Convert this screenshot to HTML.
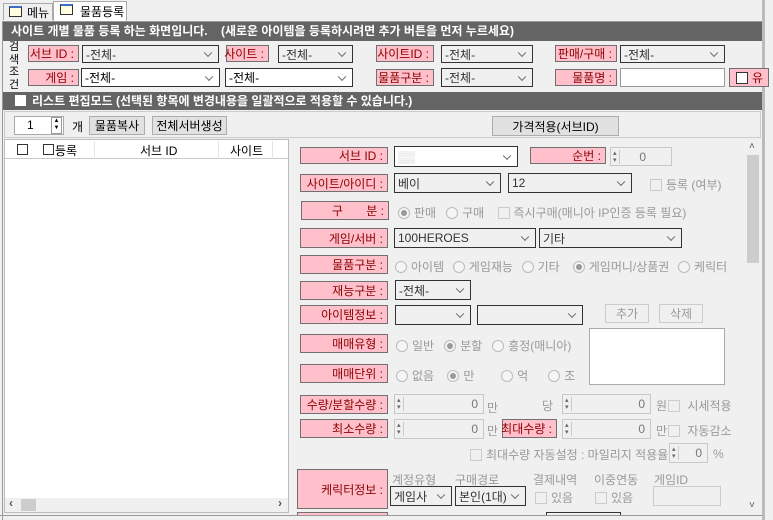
<!DOCTYPE html>
<html><head><meta charset="utf-8"><style>
*{box-sizing:border-box;margin:0;padding:0}
body{width:773px;height:520px;background:#f0f0f0;font-family:"Liberation Sans","Noto Sans CJK KR",sans-serif;font-size:12px;color:#000;position:relative;overflow:hidden}
.a{position:absolute}
.lb{position:absolute;background:#ffc0cb;border:1px solid #707070;color:#8b0000;padding-right:4px;white-space:nowrap;display:flex;align-items:center;justify-content:flex-end}
.sel{position:absolute;background:#fff;border:1px solid #333;padding-left:3px;white-space:nowrap;overflow:hidden;display:flex;align-items:center}
.sel:after{content:"";position:absolute;right:7px;top:50%;width:5px;height:5px;border-right:1px solid #666;border-bottom:1px solid #666;transform:translateY(-70%) rotate(45deg)}
.sel.d{background:#f0f0f0;color:#777}
.sel.d2{background:#f0f0f0;color:#333}
.btn{position:absolute;background:#e1e1e1;border:1px solid #adadad;display:flex;align-items:center;justify-content:center}
.btn.d{color:#999;background:#f0f0f0;border-color:#ccc}
.dis{position:absolute;color:#999;white-space:nowrap}
.rad{display:inline-block;width:12px;height:12px;border:1px solid #bbb;border-radius:50%;vertical-align:-2px;margin-right:4px;background:#f5f5f5;position:relative}
.rad.on:after{content:"";position:absolute;left:2px;top:2px;width:6px;height:6px;border-radius:50%;background:#999}
.cb{display:inline-block;width:12px;height:12px;border:1px solid #ccc;vertical-align:-2px;margin-right:4px;background:#f0f0f0}
.spin{position:absolute;background:#f0f0f0;border:1px solid #c8c8c8;padding-right:5px;color:#777;display:flex;align-items:center;justify-content:flex-end}
.spin:before{content:"▴\A▾";white-space:pre;position:absolute;left:2px;top:2px;font-size:7px;line-height:7px;color:#666;border-right:1px solid #ccc;padding-right:2px}
.bar{position:absolute;background:#646464;color:#fff;font-weight:bold}
</style></head><body>
<div class="a" style="left:3px;top:3px;width:50px;height:17px;border:1px solid #aaa;border-bottom:none;background:#f0f0f0"></div>
<div class="a" style="left:9px;top:6px;width:13px;height:11px;border:1px solid #333;border-top:2px solid #3a6fc9;background:#ffffe0"></div>
<div class="a" style="left:27px;top:4px">메뉴</div>
<div class="a" style="left:53px;top:1px;width:74px;height:21px;border:1px solid #aaa;border-bottom:none;background:#fff"></div>
<div class="a" style="left:60px;top:4px;width:13px;height:11px;border:1px solid #333;border-top:2px solid #3a6fc9;background:#ffffe0"></div>
<div class="a" style="left:80px;top:3px">물품등록</div>
<div class="a" style="left:2px;top:21px;width:762px;height:499px;border:1px solid #999;border-bottom:none"></div>
<div class="a" style="left:762px;top:0;width:3px;height:520px;background:#bbb"></div>
<div class="bar" style="left:3px;top:22px;width:759px;height:19px;padding-left:8px;line-height:19px">사이트 개별 물품 등록 하는 화면입니다. &nbsp;&nbsp;&nbsp;(새로운 아이템을 등록하시려면 추가 버튼을 먼저 누르세요)</div>
<div class="a" style="left:8px;top:41px;width:12px;font-size:11px;line-height:12.5px;text-align:center">검색조건</div>
<div class="lb" style="left:28px;top:45px;width:51px;height:17px">서브 ID :</div>
<div class="sel d2" style="left:82px;top:45px;width:137px;height:18px">-전체-</div>
<div class="lb" style="left:226px;top:45px;width:43px;height:17px">사이트 :</div>
<div class="sel d2" style="left:278px;top:45px;width:75px;height:18px">-전체-</div>
<div class="lb" style="left:376px;top:45px;width:58px;height:17px">사이트ID :</div>
<div class="sel d2" style="left:441px;top:45px;width:92px;height:18px">-전체-</div>
<div class="lb" style="left:555px;top:45px;width:62px;height:17px">판매/구매 :</div>
<div class="sel d2" style="left:620px;top:45px;width:105px;height:18px">-전체-</div>
<div class="lb" style="left:28px;top:69px;width:51px;height:17px">게임 :</div>
<div class="sel" style="left:81px;top:68px;width:139px;height:19px">-전체-</div>
<div class="sel" style="left:225px;top:68px;width:128px;height:19px">-전체-</div>
<div class="lb" style="left:376px;top:69px;width:58px;height:17px">물품구분 :</div>
<div class="sel d2" style="left:441px;top:68px;width:92px;height:19px">-전체-</div>
<div class="lb" style="left:555px;top:69px;width:62px;height:17px">물품명 :</div>
<div class="a" style="left:620px;top:68px;width:105px;height:19px;background:#fff;border:1px solid #999"></div>
<div class="lb" style="left:729px;top:68px;width:40px;height:19px;justify-content:flex-start;padding-left:6px"><span class="cb" style="background:#fff;border-color:#333;vertical-align:0"></span>유</div>
<div class="bar" style="left:3px;top:92px;width:759px;height:18px;padding-left:12px;line-height:18px"><span style="display:inline-block;width:11px;height:11px;background:#fff;vertical-align:-1px;margin-right:6px"></span>리스트 편집모드 (선택된 항목에 변경내용을 일괄적으로 적용할 수 있습니다.)</div>
<div class="a" style="left:4px;top:111px;width:757px;height:27px;border:1px solid #ccc"></div>
<div class="a" style="left:14px;top:116px;width:50px;height:19px;background:#fff;border:1px solid #aaa;padding-left:12px;line-height:17px">1</div>
<div class="a" style="left:51px;top:117px;width:11px;height:17px;border:1px solid #999;font-size:6px;line-height:7px;text-align:center">▲<br>▼</div>
<div class="a" style="left:72px;top:118px">개</div>
<div class="btn" style="left:89px;top:116px;width:56px;height:19px">물품복사</div>
<div class="btn" style="left:152px;top:116px;width:75px;height:19px">전체서버생성</div>
<div class="btn" style="left:492px;top:116px;width:127px;height:20px">가격적용(서브ID)</div>
<div class="a" style="left:4px;top:139px;width:285px;height:374px;background:#fff;border:1px solid #bbb"></div>
<div class="a" style="left:5px;top:140px;width:283px;height:19px;border-bottom:1px solid #c8c8c8"></div>
<div class="a" style="left:17px;top:144px;width:11px;height:11px;border:1px solid #333"></div>
<div class="a" style="left:43px;top:144px;width:11px;height:11px;border:1px solid #333"></div>
<div class="a" style="left:55px;top:142px">등록</div>
<div class="a" style="left:94px;top:141px;width:1px;height:18px;background:#e5e5e5"></div>
<div class="a" style="left:140px;top:142px">서브 ID</div>
<div class="a" style="left:218px;top:141px;width:1px;height:18px;background:#e5e5e5"></div>
<div class="a" style="left:230px;top:142px">사이트</div>
<div class="a" style="left:272px;top:141px;width:1px;height:18px;background:#e5e5e5"></div>
<div class="a" style="left:5px;top:498px;width:283px;height:14px;background:#f0f0f0"></div>
<div class="a" style="left:21px;top:499px;width:15px;height:12px;background:#cdcdcd"></div>
<div class="a" style="left:9px;top:496px;color:#555;font-weight:bold">‹</div>
<div class="a" style="left:278px;top:496px;color:#555;font-weight:bold">›</div>
<div class="a" style="left:0;top:515px;width:762px;height:1px;background:#999"></div>
<div class="a" style="left:745px;top:140px;width:16px;height:373px;background:#f0f0f0"></div>
<div class="a" style="left:747px;top:155px;width:12px;height:108px;background:#cdcdcd"></div>
<div class="a" style="left:749px;top:141px;font-size:10px;color:#555">˄</div>
<div class="a" style="left:749px;top:500px;font-size:10px;color:#555">˅</div>
<div class="lb" style="left:300px;top:147px;width:88px;height:17px">서브 ID :</div>
<div class="sel" style="left:394px;top:146px;width:124px;height:21px;color:#ccc">▒▒</div>
<div class="lb" style="left:530px;top:147px;width:76px;height:17px">순번 :</div>
<div class="spin" style="left:610px;top:147px;width:62px;height:19px">0&nbsp;&nbsp;&nbsp;&nbsp;&nbsp;&nbsp;</div>
<div class="lb" style="left:300px;top:174px;width:88px;height:18px">사이트/아이디 :</div>
<div class="sel d2" style="left:394px;top:173px;width:107px;height:20px">베이</div>
<div class="sel d2" style="left:508px;top:173px;width:124px;height:20px">12</div>
<div class="dis" style="left:650px;top:176px"><span class="cb"></span>등록 (여부)</div>
<div class="lb" style="left:301px;top:201px;width:88px;height:19px">구 &nbsp;&nbsp;&nbsp;&nbsp;&nbsp;&nbsp;분 :</div>
<div class="dis" style="left:398px;top:204px"><span class="rad on"></span>판매 &nbsp;&nbsp;<span class="rad"></span>구매 &nbsp;&nbsp;&nbsp;<span class="cb"></span>즉시구매(매니아 IP인증 등록 필요)</div>
<div class="lb" style="left:300px;top:228px;width:88px;height:20px">게임/서버 :</div>
<div class="sel d2" style="left:394px;top:228px;width:142px;height:20px">100HEROES</div>
<div class="sel d2" style="left:539px;top:228px;width:143px;height:20px">기타</div>
<div class="lb" style="left:300px;top:255px;width:88px;height:19px">물품구분 :</div>
<div class="dis" style="left:395px;top:258px;word-spacing:1px"><span class="rad"></span>아이템 &nbsp;<span class="rad"></span>게임재능 &nbsp;<span class="rad"></span>기타 &nbsp;&nbsp;<span class="rad on"></span>게임머니/상품권 &nbsp;<span class="rad"></span>케릭터</div>
<div class="lb" style="left:300px;top:281px;width:88px;height:19px">재능구분 :</div>
<div class="sel d2" style="left:395px;top:280px;width:76px;height:20px">-전체-</div>
<div class="lb" style="left:300px;top:305px;width:88px;height:19px">아이템정보 :</div>
<div class="sel d" style="left:395px;top:305px;width:76px;height:20px"></div>
<div class="sel d" style="left:477px;top:305px;width:106px;height:20px"></div>
<div class="btn d" style="left:605px;top:304px;width:44px;height:19px">추가</div>
<div class="btn d" style="left:659px;top:304px;width:44px;height:19px">삭제</div>
<div class="a" style="left:589px;top:328px;width:136px;height:57px;background:#fff;border:1px solid #aaa"></div>
<div class="lb" style="left:300px;top:334px;width:88px;height:19px">매매유형 :</div>
<div class="dis" style="left:396px;top:337px"><span class="rad"></span>일반 &nbsp;&nbsp;<span class="rad on"></span>분할 &nbsp;&nbsp;<span class="rad"></span>흥정(매니아)</div>
<div class="lb" style="left:300px;top:364px;width:88px;height:19px">매매단위 :</div>
<div class="dis" style="left:396px;top:367px"><span class="rad"></span>없음 &nbsp;&nbsp;&nbsp;<span class="rad on"></span>만 &nbsp;&nbsp;&nbsp;&nbsp;&nbsp;&nbsp;&nbsp;<span class="rad"></span>억 &nbsp;&nbsp;&nbsp;&nbsp;&nbsp;<span class="rad"></span>조</div>
<div class="lb" style="left:300px;top:395px;width:88px;height:19px">수량/분할수량 :</div>
<div class="spin" style="left:394px;top:394px;width:90px;height:20px">0</div>
<div class="dis" style="left:487px;top:399px">만</div>
<div class="dis" style="left:542px;top:397px">당</div>
<div class="spin" style="left:562px;top:394px;width:89px;height:20px">0</div>
<div class="dis" style="left:656px;top:397px">원<span class="cb" style="margin-left:1px"></span>&nbsp;시세적용</div>
<div class="lb" style="left:300px;top:419px;width:88px;height:19px">최소수량 :</div>
<div class="spin" style="left:394px;top:419px;width:90px;height:20px">0</div>
<div class="dis" style="left:487px;top:422px">만</div>
<div class="lb" style="left:502px;top:419px;width:55px;height:19px">최대수량 :</div>
<div class="spin" style="left:562px;top:419px;width:89px;height:20px">0</div>
<div class="dis" style="left:656px;top:422px">만<span class="cb" style="margin-left:1px"></span>&nbsp;자동감소</div>
<div class="dis" style="left:470px;top:446px"><span class="cb"></span>최대수량 자동설정 : 마일리지 적용율</div>
<div class="spin" style="left:669px;top:443px;width:39px;height:20px">0</div>
<div class="dis" style="left:713px;top:447px">%</div>
<div class="lb" style="left:297px;top:469px;width:91px;height:40px">케릭터정보 :</div>
<div class="dis" style="left:392px;top:471px">계정유형</div>
<div class="dis" style="left:455px;top:471px">구매경로</div>
<div class="dis" style="left:533px;top:471px">결제내역</div>
<div class="dis" style="left:594px;top:471px">이중연동</div>
<div class="dis" style="left:654px;top:471px">게임ID</div>
<div class="sel d2" style="left:390px;top:486px;width:62px;height:20px">게임사</div>
<div class="sel d2" style="left:455px;top:486px;width:71px;height:20px">본인(1대)</div>
<div class="dis" style="left:535px;top:489px"><span class="cb"></span>있음</div>
<div class="dis" style="left:595px;top:489px"><span class="cb"></span>있음</div>
<div class="a" style="left:653px;top:486px;width:68px;height:20px;border:1px solid #ccc;background:#f0f0f0"></div>
<div class="a" style="left:297px;top:512px;width:91px;height:3px;background:#ffc0cb;border:1px solid #707070;border-bottom:none"></div>
<div class="a" style="left:546px;top:512px;width:75px;height:3px;border:1px solid #333;border-bottom:none"></div>
</body></html>
